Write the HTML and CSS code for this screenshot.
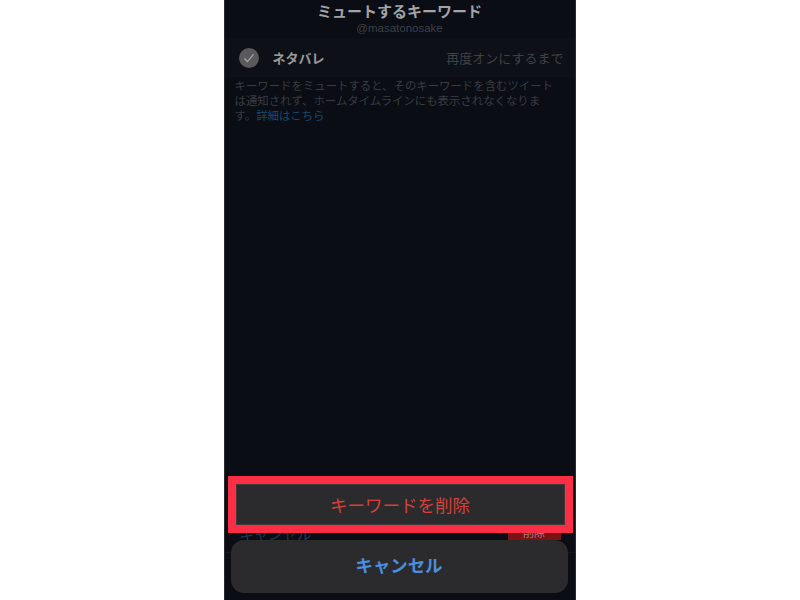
FILE: index.html
```html
<!DOCTYPE html>
<html lang="ja">
<head>
<meta charset="utf-8">
<title>ミュートするキーワード</title>
<link rel="stylesheet" href="styles.css">
</head>
<body>
<div class="phone">
  <header class="head">
    <div class="title">ミュートするキーワード</div>
    <div class="handle">@masatonosake</div>
  </header>
  <div class="row">
    <span class="check"><svg viewBox="0 0 20 20" width="20" height="20"><path d="M5.5 10.5l3 3.2 6-7.4" fill="none" stroke="#a9a9a9" stroke-width="1.2"/></svg></span>
    <span class="word">ネタバレ</span>
    <span class="until">再度オンにするまで</span>
  </div>
  <p class="note">キーワードをミュートすると、そのキーワードを含むツイートは通知されず、ホームタイムラインにも表示されなくなります。<span class="link">詳細はこちら</span></p>
  <div class="spacer"></div>
  <div class="under">
    <span class="under-cancel">キャンセル</span>
    <span class="under-del">削除</span>
  </div>
  <div class="sheet">
    <div class="sheet-btn">キャンセル</div>
  </div>
  <div class="highlight"><div class="danger">キーワードを削除</div></div>
</div>
</body>
</html>
```
FILE: styles.css
```css
html, body { margin: 0; height: 100%; background: #fff; }
body { display: flex; justify-content: center; overflow: hidden; font-family: "Noto Sans CJK JP", "Noto Sans", sans-serif; }
.phone { position: relative; width: 350px; height: 600px; margin-left: -1px; background: #0a0d14; border: solid #2a2c30; border-width: 0 1px; display: flex; flex-direction: column; }
.head { height: 38px; text-align: center; }
.title { font-size: 15px; line-height: 21px; font-weight: 700; color: #a3a3a5; }
.handle { font-size: 11.5px; line-height: 15px; color: #3d4047; font-family: "Liberation Sans", sans-serif; }
.row { height: 39px; display: flex; align-items: center; padding: 0 11px 0 14px; background: #0d1016; }
.check { width: 20px; height: 20px; border-radius: 50%; background: #5a5a5c; flex: none; }
.check svg { display: block; }
.word { margin-left: 14px; font-size: 13px; font-weight: 700; color: #9a9a9c; }
.until { margin-left: auto; font-size: 13px; color: #3f4146; }
.note { margin: 1px 0 0 10px; width: 322px; font-size: 11.4px; line-height: 15px; color: #393c43; }
.link { color: #164a70; }
.spacer { flex: 1; }
.under { height: 28px; margin-bottom: 47px; border-bottom: 1px solid #14171d; display: flex; align-items: flex-start; justify-content: space-between; padding: 0 14px 0 15px; }
.under-cancel { font-size: 14.4px; line-height: 20px; color: #1f3a57; }
.under-del { width: 53px; height: 16px; background: #7a1216; color: #9a8a8a; font-size: 11px; line-height: 16px; text-align: center; }
.sheet { position: absolute; left: 6px; right: 7px; top: 540px; height: 53px; }
.sheet-btn { height: 100%; border-radius: 13px; background: #2b2b2d; color: #4a8fe0; font-size: 17.4px; font-weight: 700; line-height: 50px; text-align: center; }
.highlight { position: absolute; left: 3px; right: 2px; top: 476px; height: 57px; box-sizing: border-box; border: 8px solid #fb2e45; background: #2b2b2d; }
.danger { height: 100%; border: 1px solid #45383a; box-sizing: border-box; color: #d5403a; font-size: 17.5px; line-height: 39px; text-align: center; }
```
